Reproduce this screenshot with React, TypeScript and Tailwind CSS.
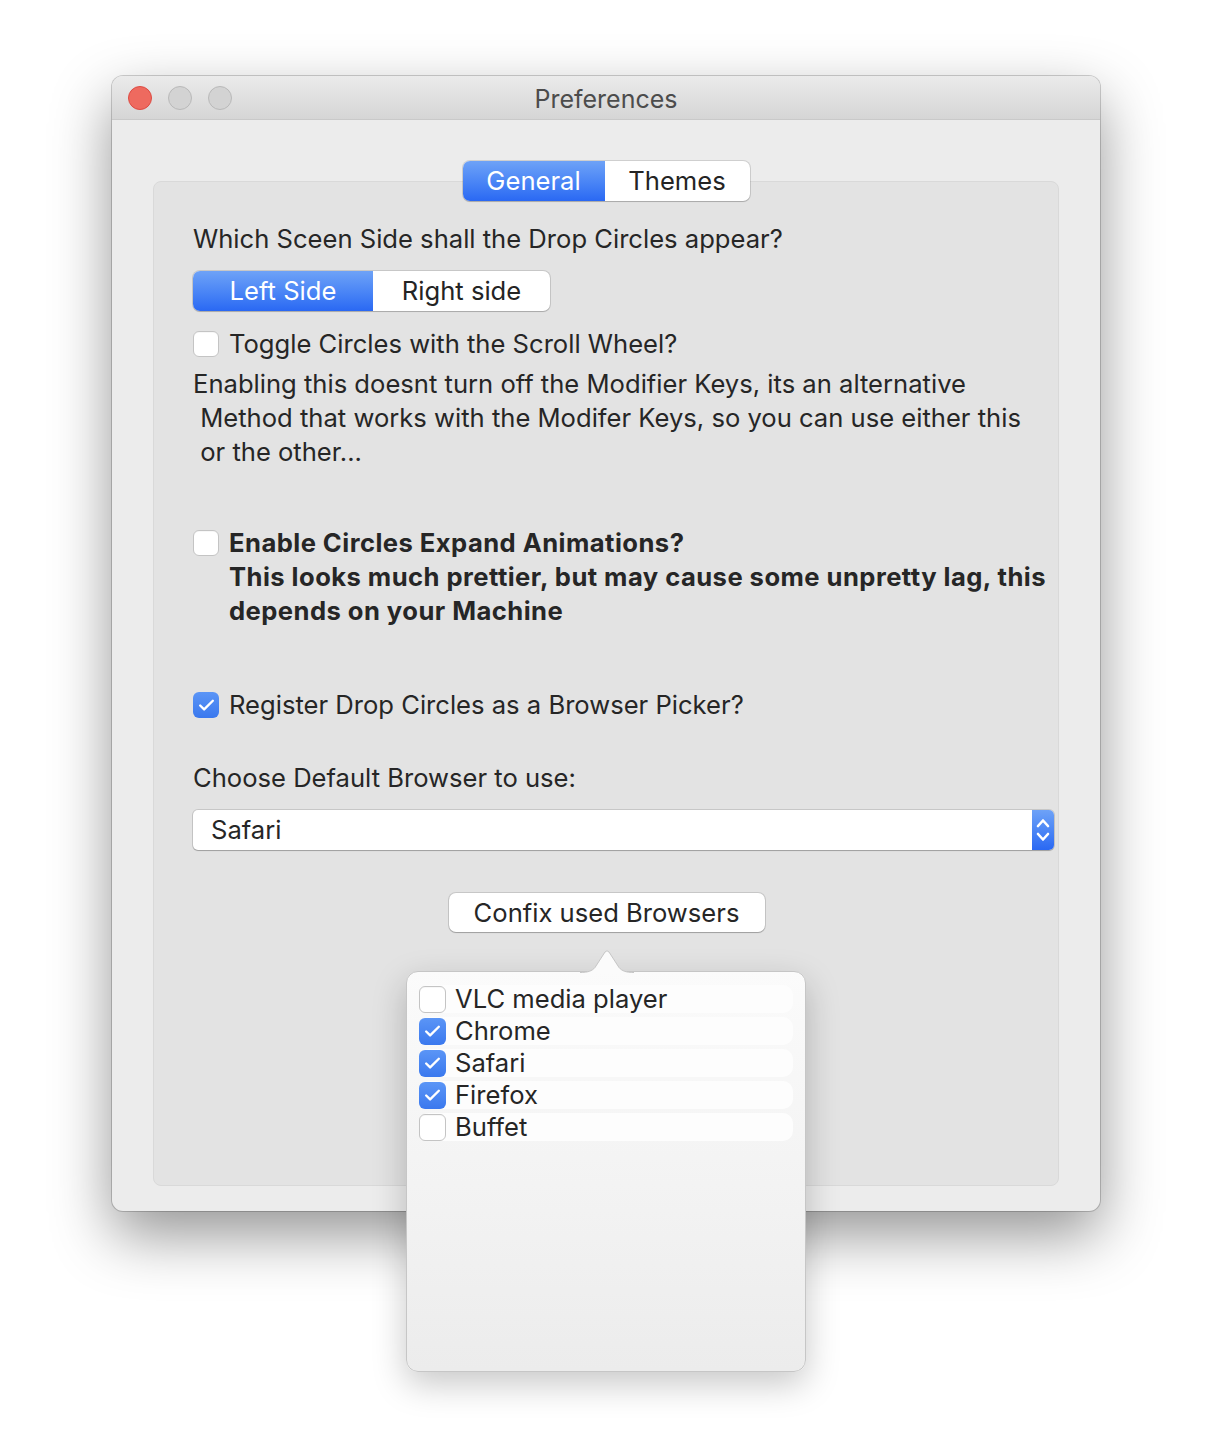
import { Check } from "lucide-react";

const browsers = [
  { name: "VLC media player", on: false },
  { name: "Chrome", on: true },
  { name: "Safari", on: true },
  { name: "Firefox", on: true },
  { name: "Buffet", on: false },
];

function Box({ on, size = "h-[26px] w-[26px]" }: { on: boolean; size?: string }) {
  if (on) {
    return (
      <span
        className={`${size} grid shrink-0 place-items-center rounded-[6px] bg-gradient-to-b from-[#5b95f6] to-[#3a78ee] text-white`}
      >
        <Check size={19} strokeWidth={3} />
      </span>
    );
  }
  return (
    <span
      className={`${size} block shrink-0 rounded-[6px] border border-[#c4c4c4] bg-white shadow-[inset_0_1px_0_rgba(0,0,0,0.03)]`}
    />
  );
}

function Segmented({
  items,
  widths,
}: {
  items: string[];
  widths: string[];
}) {
  return (
    <div className="flex h-[40px] overflow-hidden rounded-[7px] bg-white shadow-[0_0_0_1px_rgba(0,0,0,0.12),0_1px_1px_rgba(0,0,0,0.15)]">
      {items.map((item, i) => (
        <div
          key={item}
          className={
            i === 0
              ? `${widths[i]} flex items-center justify-center bg-gradient-to-b from-[#6ea2f7] to-[#2a68f3] text-white`
              : `${widths[i]} flex items-center justify-center text-[#242424]`
          }
        >
          {item}
        </div>
      ))}
    </div>
  );
}

export default function App() {
  return (
    <div className="flex min-h-[1452px] justify-center bg-white pt-[76px] font-[Inter,sans-serif] text-[25.6px] text-[#262626]">
      <div className="relative h-[1135px] w-[988px] rounded-[11px] bg-[#ececec] shadow-[0_0_0_1px_rgba(0,0,0,0.18),0_24px_60px_rgba(0,0,0,0.42)]">
        {/* title bar */}
        <div className="relative flex h-[44px] items-center rounded-t-[11px] border-b border-[#c9c9c9] bg-gradient-to-b from-[#ebebeb] to-[#d5d5d5] px-[16px]">
          <div className="flex gap-[16px]">
            <span className="h-[24px] w-[24px] rounded-full border border-[#dd4b43] bg-[#ee6a5f]" />
            <span className="h-[24px] w-[24px] rounded-full border border-[#b9b9b9] bg-[#d3d3d3]" />
            <span className="h-[24px] w-[24px] rounded-full border border-[#b9b9b9] bg-[#d3d3d3]" />
          </div>
          <div className="absolute inset-x-0 top-[2px] flex h-[44px] items-center justify-center text-[25px] text-[#4c4c4c]">
            Preferences
          </div>
        </div>

        {/* body */}
        <div className="px-[41px] pt-[41px]">
          <div className="relative z-10 flex justify-center">
            <Segmented items={["General", "Themes"]} widths={["w-[142px]", "w-[145px]"]} />
          </div>
          <div className="-mt-[20px] h-[1005px] rounded-[8px] border border-[#d9d9d9] bg-[#e3e3e3] pl-[39px] pr-[8px] pt-[40px] leading-[34px]">
            <p>Which Sceen Side shall the Drop Circles appear?</p>
            <div className="mt-[15px] flex">
              <Segmented items={["Left Side", "Right side"]} widths={["w-[180px]", "w-[177px]"]} />
            </div>
            <div className="mt-[16px] flex items-center gap-[10px]">
              <Box on={false} />
              <span>Toggle Circles with the Scroll Wheel?</span>
            </div>
            <p className="mt-[6px] whitespace-pre">
              {"Enabling this doesnt turn off the Modifier Keys, its an alternative\n Method that works with the Modifer Keys, so you can use either this\n or the other..."}
            </p>

            <div className="mt-[57px] flex items-start gap-[10px] font-bold tracking-[0.45px]">
              <div className="mt-[4px] shrink-0">
                <Box on={false} />
              </div>
              <div>
                Enable Circles Expand Animations?
                <br />
                This looks much prettier, but may cause some unpretty lag, this
                <br />
                depends on your Machine
              </div>
            </div>

            <div className="mt-[60px] flex items-center gap-[10px]">
              <Box on={true} />
              <span>Register Drop Circles as a Browser Picker?</span>
            </div>

            <p className="mt-[39px]">Choose Default Browser to use:</p>

            <div className="mt-[15px] flex h-[40px] w-[861px] overflow-hidden rounded-[5px] bg-white shadow-[0_0_0_1px_rgba(0,0,0,0.12),0_1px_1px_rgba(0,0,0,0.2)]">
              <div className="flex flex-1 items-center pl-[18px]">Safari</div>
              <div className="flex w-[22px] items-center justify-center bg-gradient-to-b from-[#6ea2f7] to-[#2a68f3]">
                <svg width="14" height="28" viewBox="0 0 14 28" fill="none" stroke="white" strokeWidth="2.6" strokeLinecap="round" strokeLinejoin="round">
                  <path d="M2 10 L7 4.5 L12 10" />
                  <path d="M2 18 L7 23.5 L12 18" />
                </svg>
              </div>
            </div>

            <div className="mt-[43px] flex justify-center pr-[30px]">
              <div className="flex h-[39px] w-[316px] items-center justify-center rounded-[7px] bg-white shadow-[0_0_0_1px_rgba(0,0,0,0.12),0_1px_1px_rgba(0,0,0,0.2)]">
                Confix used Browsers
              </div>
            </div>
          </div>
        </div>

        {/* popover */}
        <div className="absolute left-[294px] top-[895px] z-20 h-[401px] w-[400px] rounded-[12px] border border-[#c6c6c6] bg-gradient-to-b from-[#fbfbfb] to-[#ececec] px-[12px] pt-[13px] shadow-[0_12px_34px_rgba(0,0,0,0.22)]">
          <svg className="absolute -top-[23px] left-[173px]" width="54" height="25" viewBox="0 0 54 25">
            <path d="M0 23.5 C8 23.5 12 22 15 18.5 L25 3 Q27 0.5 29 3 L39 18.5 C42 22 46 23.5 54 23.5" fill="#fbfbfb" stroke="#c6c6c6" strokeWidth="1" />
            <rect x="0" y="24" width="54" height="2" fill="#fbfbfb" />
          </svg>
          <div className="flex flex-col gap-[4px] leading-[28px]">
            {browsers.map((b) => (
              <div key={b.name} className="flex h-[28px] items-center gap-[9px] rounded-[10px] bg-[#fdfdfd]">
                <Box on={b.on} size="h-[27px] w-[27px]" />
                <span>{b.name}</span>
              </div>
            ))}
          </div>
        </div>
      </div>
    </div>
  );
}
